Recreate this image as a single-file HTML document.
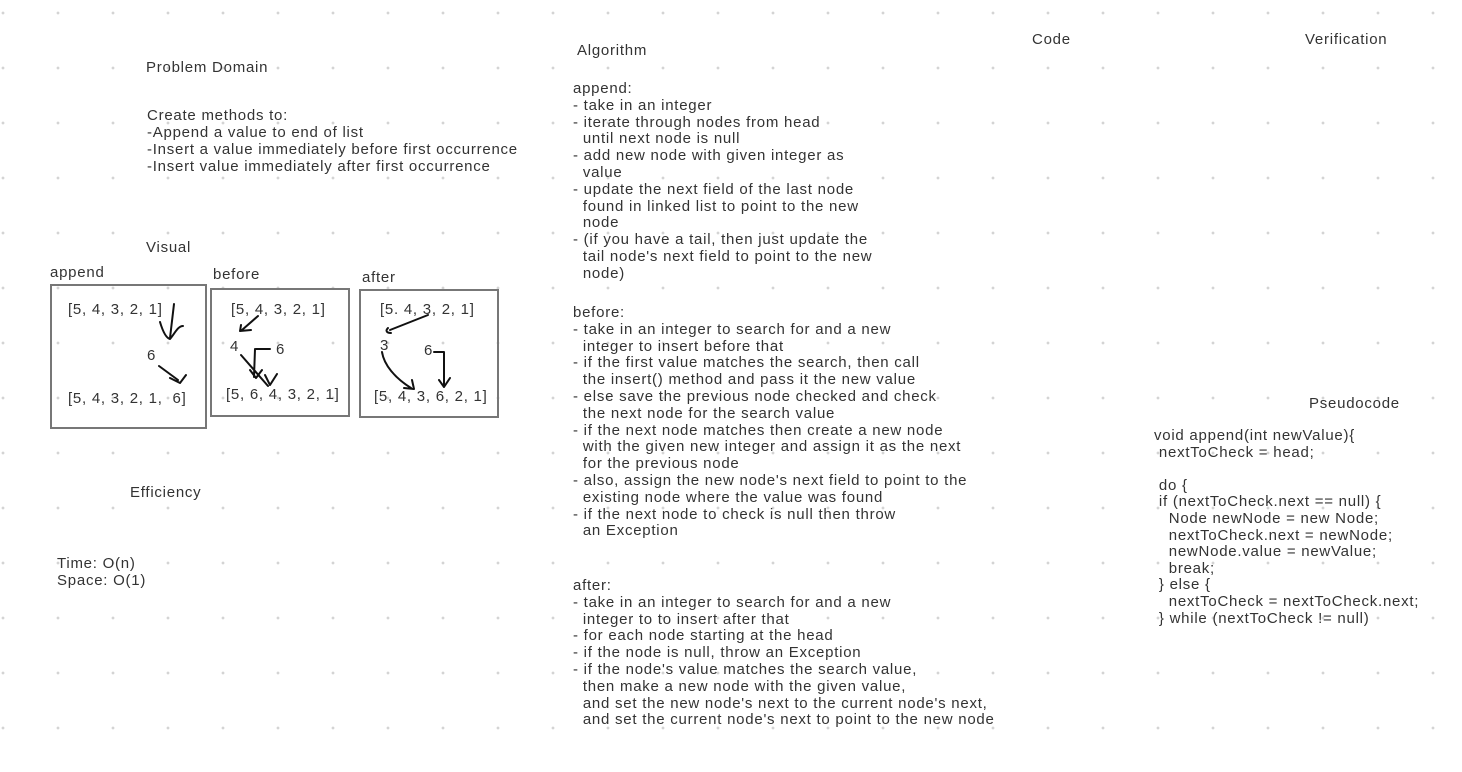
<!DOCTYPE html>
<html><head><meta charset="utf-8"><style>
html,body{margin:0;padding:0}
body{width:1462px;height:772px;position:relative;overflow:hidden;background-color:#fff;
background-image:radial-gradient(circle,#d4d4d4 1.2px,transparent 1.6px);
background-size:55px 55px;background-position:-24.5px -14.5px;
font-family:"Liberation Sans",Arial,sans-serif;font-size:15px;color:#333}
.t{position:absolute;white-space:pre;line-height:16.8px;letter-spacing:0.75px}
.box{position:absolute;border:2px solid #777;box-sizing:border-box}
svg{position:absolute;left:0;top:0}
</style></head><body>
<div class="t" style="left:146px;top:60px">Problem Domain</div>
<div class="t" style="left:147px;top:107px;line-height:17px">Create methods to:
-Append a value to end of list
-Insert a value immediately before first occurrence
-Insert value immediately after first occurrence</div>
<div class="t" style="left:146px;top:240px">Visual</div>
<div class="t" style="left:50px;top:265px">append</div>
<div class="t" style="left:213px;top:267px">before</div>
<div class="t" style="left:362px;top:270px">after</div>
<div class="box" style="left:50px;top:284px;width:157px;height:145px"></div>
<div class="box" style="left:210px;top:288px;width:140px;height:129px"></div>
<div class="box" style="left:359px;top:289px;width:140px;height:129px"></div>
<div class="t" style="left:68px;top:302px">[5, 4, 3, 2, 1]</div>
<div class="t" style="left:147px;top:348px">6</div>
<div class="t" style="left:68px;top:391px">[5, 4, 3, 2, 1,  6]</div>
<div class="t" style="left:231px;top:302px">[5, 4, 3, 2, 1]</div>
<div class="t" style="left:230px;top:339px">4</div>
<div class="t" style="left:276px;top:342px">6</div>
<div class="t" style="left:226px;top:387px">[5, 6, 4, 3, 2, 1]</div>
<div class="t" style="left:380px;top:302px">[5. 4, 3, 2, 1]</div>
<div class="t" style="left:380px;top:338px">3</div>
<div class="t" style="left:424px;top:343px">6</div>
<div class="t" style="left:374px;top:389px">[5, 4, 3, 6, 2, 1]</div>
<svg width="1462" height="772" fill="none" stroke="#111" stroke-width="2" stroke-linecap="round" stroke-linejoin="round">
<path d="M174 304 L170 338 M160 322 C163 332 166 338 170 339 C175 333 178 326 183 326"/>
<path d="M159 366 L178 380 M170 378 L180 383 L186 375"/>
<path d="M258 316 L242 330 M241 325 L240 331 L251 330"/>
<path d="M241 355 L268 386 M255 349 L254 377 M256 349 L270 349 M250 370 L256 378 L262 370 M265 375 L270 385 L277 374"/>
<path d="M428 315 L390 330 M388 328 C385 331 387 333 391 333"/>
<path d="M382 352 C384 365 395 378 411 388 M404 388 L414 389 L412 380"/>
<path d="M434 352 L444 352 L444 386 M439 380 L444 387 L450 378"/>
</svg>
<div class="t" style="left:130px;top:485px">Efficiency</div>
<div class="t" style="left:57px;top:556px">Time: O(n)
Space: O(1)</div>
<div class="t" style="left:577px;top:43px">Algorithm</div>
<div class="t" style="left:573px;top:81px">append:
- take in an integer
- iterate through nodes from head
  until next node is null
- add new node with given integer as
  value
- update the next field of the last node
  found in linked list to point to the new
  node
- (if you have a tail, then just update the
  tail node's next field to point to the new
  node)</div>
<div class="t" style="left:573px;top:305px">before:
- take in an integer to search for and a new
  integer to insert before that
- if the first value matches the search, then call
  the insert() method and pass it the new value
- else save the previous node checked and check
  the next node for the search value
- if the next node matches then create a new node
  with the given new integer and assign it as the next
  for the previous node
- also, assign the new node's next field to point to the
  existing node where the value was found
- if the next node to check is null then throw
  an Exception</div>
<div class="t" style="left:573px;top:578px">after:
- take in an integer to search for and a new
  integer to to insert after that
- for each node starting at the head
- if the node is null, throw an Exception
- if the node's value matches the search value,
  then make a new node with the given value,
  and set the new node's next to the current node's next,
  and set the current node's next to point to the new node</div>
<div class="t" style="left:1032px;top:32px">Code</div>
<div class="t" style="left:1305px;top:32px">Verification</div>
<div class="t" style="left:1309px;top:396px">Pseudocode</div>
<div class="t" style="left:1154px;top:428px;line-height:16.6px">void append(int newValue){
 nextToCheck = head;

 do {
 if (nextToCheck.next == null) {
   Node newNode = new Node;
   nextToCheck.next = newNode;
   newNode.value = newValue;
   break;
 } else {
   nextToCheck = nextToCheck.next;
 } while (nextToCheck != null)</div>
</body></html>
